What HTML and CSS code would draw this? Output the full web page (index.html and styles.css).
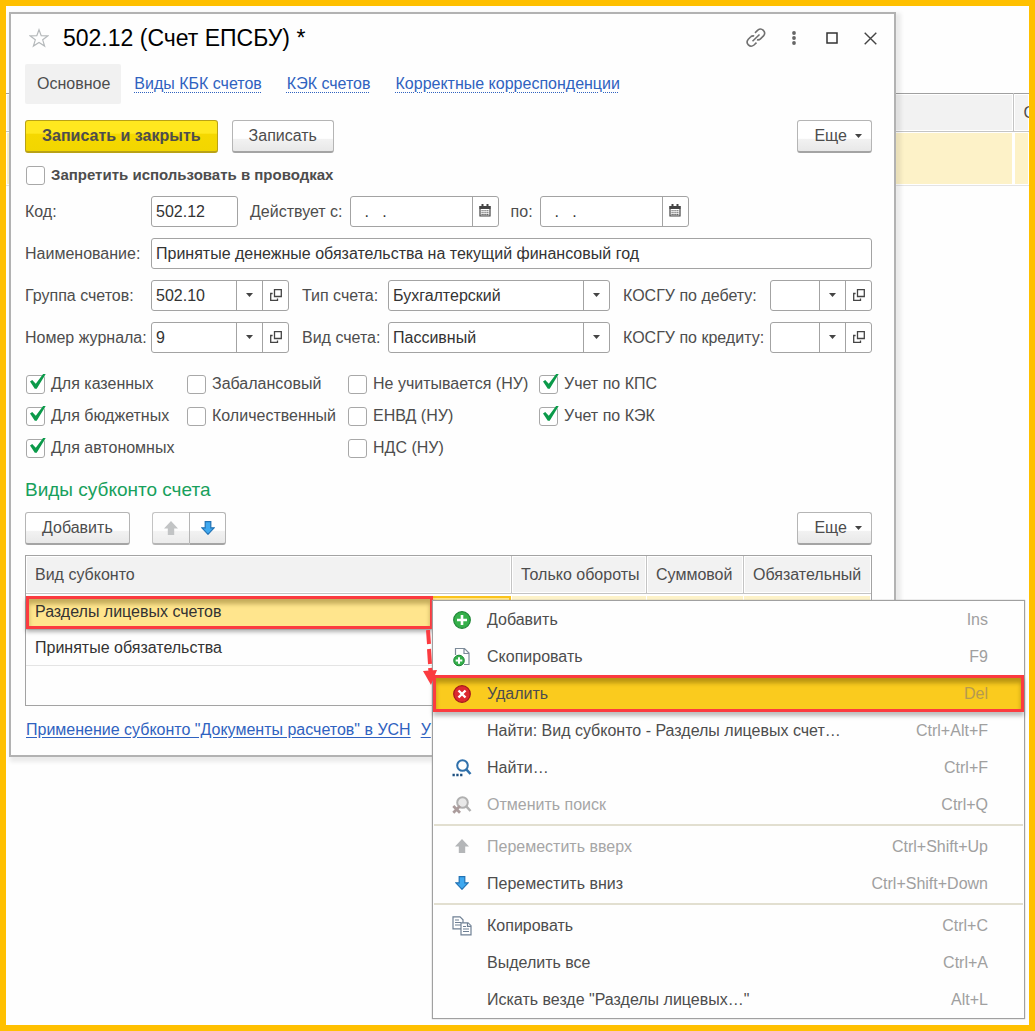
FILE: index.html
```html
<!DOCTYPE html>
<html lang="ru">
<head>
    <meta charset="UTF-8">
    <meta name="viewport" content="width=device-width, initial-scale=1.0">
    <title>502.12 (Счет ЕПСБУ)</title>
    <link rel="stylesheet" href="styles.css">
</head>
<body>
    <!-- Shared icons -->
    <svg class="sprite" aria-hidden="true">
        <symbol id="i-caret" viewBox="0 0 7 4"><path d="M0 0h7L3.500 4z" fill="#444"/></symbol>
        <symbol id="i-open" viewBox="0 0 12 12"><path d="M4.500 .7h6.800v6.800H4.500zM2.600 4.500H.7v6.800h6.800V9.400" fill="none" stroke="#444" stroke-width="1.300"/></symbol>
        <symbol id="i-calendar" viewBox="0 0 12 13">
            <path d="M1 2.500h10v9.500H1z" fill="#fff" stroke="#444" stroke-width="1.200"/>
            <path d="M.5 2h11v3H.5zM2.500 0h2v3h-2zM7.500 0h2v3h-2z" fill="#444"/>
            <path d="M2.500 6.700h7M2.500 8.700h7M2.500 10.600h7" stroke="#444" stroke-width="1.100" stroke-dasharray="1.200 .7"/>
        </symbol>
        <symbol id="i-up" viewBox="0 0 14 14"><path d="M7 0l7 7.500h-3.800V14H3.800V7.500H0z" fill="#b4b6b8"/></symbol>
        <symbol id="i-down" viewBox="0 0 14 14"><path d="M4.200.6h5.600v6.200h3.300L7 13.300.9 6.800h3.300z" fill="#3fa9f0" stroke="#2273b5" stroke-width="1.200"/></symbol>
    </svg>

    <div class="screen">
        <!-- List window behind the dialog -->
        <table class="backdrop">
            <tr><th></th><th class="last">С</th></tr>
            <tr><td></td><td class="last"></td></tr>
        </table>

        <main class="dialog">
            <header class="titlebar">
                <svg class="star" viewBox="0 0 20 19"><path d="M10 1.200l2.200 5.900 6.800.2-5.300 4 1.900 6.300L10 14l-5.600 3.600 1.900-6.300-5.300-4 6.800-.2z" fill="none" stroke="#b5b9bb" stroke-width="1.200"/></svg>
                <h1>502.12 (Счет ЕПСБУ) *</h1>
                <button class="win-btn" aria-label="Ссылка">
                    <svg width="20" height="20" viewBox="0 0 20 20" fill="none" stroke="#707070" stroke-width="1.600"><path d="M9 4.800l2.800-2.600c3.800-3.300 9 1.700 5.700 5.700l-3 3c-1 .9-2.200 1.200-3.500.9M4.800 8.700l-2.500 2.500c-3.400 4 1.700 9.200 5.700 5.800l2.500-2.400M4.800 8.700c1-.8 2.200-1 3.400-.7M6.500 13.300l7-6.800"/></svg>
                </button>
                <button class="win-btn" aria-label="Меню">
                    <svg width="4" height="14" viewBox="0 0 4 14" fill="#666"><circle cx="2" cy="2" r="1.900"/><circle cx="2" cy="7" r="1.900"/><circle cx="2" cy="12" r="1.900"/></svg>
                </button>
                <button class="win-btn" aria-label="Развернуть">
                    <svg width="12" height="12" viewBox="0 0 12 12"><path d="M1 1h10v10H1z" fill="none" stroke="#333" stroke-width="1.500"/></svg>
                </button>
                <button class="win-btn" aria-label="Закрыть">
                    <svg width="13" height="13" viewBox="0 0 13 13"><path d="M.7.7l11.600 11.600M12.300.7L.7 12.300" stroke="#444" stroke-width="1.400"/></svg>
                </button>
            </header>

            <nav class="tabs">
                <a class="tab active" href="#">Основное</a>
                <a class="tab" href="#">Виды КБК счетов</a>
                <a class="tab" href="#">КЭК счетов</a>
                <a class="tab" href="#">Корректные корреспонденции</a>
            </nav>

            <div class="toolbar">
                <button class="btn primary">Записать и закрыть</button>
                <button class="btn">Записать</button>
                <button class="btn more">Еще <svg class="caret"><use href="#i-caret"/></svg></button>
            </div>

            <label class="check strong"><input type="checkbox"> Запретить использовать в проводках</label>

            <div class="form">
                <div class="row">
                    <label class="first" for="code">Код:</label>
                    <div class="field code"><input type="text" id="code" value="502.12"></div>
                    <label class="date-label" for="from">Действует с:</label>
                    <div class="field date"><input type="text" id="from" value="  .   ."><button aria-label="Календарь"><svg class="cal"><use href="#i-calendar"/></svg></button></div>
                    <label class="date-label" for="to">по:</label>
                    <div class="field date"><input type="text" id="to" value="  .   ."><button aria-label="Календарь"><svg class="cal"><use href="#i-calendar"/></svg></button></div>
                </div>
                <div class="row">
                    <label class="first" for="name">Наименование:</label>
                    <div class="field wide"><input type="text" id="name" value="Принятые денежные обязательства на текущий финансовый год"></div>
                </div>
                <div class="row grid">
                    <label for="group">Группа счетов:</label>
                    <div class="field"><input type="text" id="group" value="502.10"><button aria-label="Выбрать"><svg class="caret"><use href="#i-caret"/></svg></button><button aria-label="Открыть"><svg class="open"><use href="#i-open"/></svg></button></div>
                    <label class="indent" for="type">Тип счета:</label>
                    <div class="field"><select id="type"><option>Бухгалтерский</option></select><span class="drop"><svg class="caret"><use href="#i-caret"/></svg></span></div>
                    <label class="indent" for="debit">КОСГУ по дебету:</label>
                    <div class="field"><input type="text" id="debit"><button aria-label="Выбрать"><svg class="caret"><use href="#i-caret"/></svg></button><button aria-label="Открыть"><svg class="open"><use href="#i-open"/></svg></button></div>
                </div>
                <div class="row grid">
                    <label for="journal">Номер журнала:</label>
                    <div class="field"><input type="text" id="journal" value="9"><button aria-label="Выбрать"><svg class="caret"><use href="#i-caret"/></svg></button><button aria-label="Открыть"><svg class="open"><use href="#i-open"/></svg></button></div>
                    <label class="indent" for="kind">Вид счета:</label>
                    <div class="field"><select id="kind"><option>Пассивный</option></select><span class="drop"><svg class="caret"><use href="#i-caret"/></svg></span></div>
                    <label class="indent" for="credit">КОСГУ по кредиту:</label>
                    <div class="field"><input type="text" id="credit"><button aria-label="Выбрать"><svg class="caret"><use href="#i-caret"/></svg></button><button aria-label="Открыть"><svg class="open"><use href="#i-open"/></svg></button></div>
                </div>
            </div>

            <div class="checks">
                <div class="check-col">
                    <label class="check"><input type="checkbox" checked> Для казенных</label>
                    <label class="check"><input type="checkbox" checked> Для бюджетных</label>
                    <label class="check"><input type="checkbox" checked> Для автономных</label>
                </div>
                <div class="check-col">
                    <label class="check"><input type="checkbox"> Забалансовый</label>
                    <label class="check"><input type="checkbox"> Количественный</label>
                </div>
                <div class="check-col">
                    <label class="check"><input type="checkbox"> Не учитывается (НУ)</label>
                    <label class="check"><input type="checkbox"> ЕНВД (НУ)</label>
                    <label class="check"><input type="checkbox"> НДС (НУ)</label>
                </div>
                <div class="check-col">
                    <label class="check"><input type="checkbox" checked> Учет по КПС</label>
                    <label class="check"><input type="checkbox" checked> Учет по КЭК</label>
                </div>
            </div>

            <h2>Виды субконто счета</h2>
            <div class="toolbar table-toolbar">
                <button class="btn">Добавить</button>
                <div class="btn-group">
                    <button class="btn" aria-label="Вверх" disabled><svg class="arrow"><use href="#i-up"/></svg></button>
                    <button class="btn" aria-label="Вниз"><svg class="arrow"><use href="#i-down"/></svg></button>
                </div>
                <button class="btn more">Еще <svg class="caret"><use href="#i-caret"/></svg></button>
            </div>

            <div class="table-box">
                <table class="subconto">
                    <colgroup><col><col class="c-turn"><col class="c-sum"><col class="c-req"></colgroup>
                    <tr><th>Вид субконто</th><th>Только обороты</th><th>Суммовой</th><th>Обязательный</th></tr>
                    <tr class="selected"><td>Разделы лицевых счетов<span class="callout"></span></td><td></td><td></td><td></td></tr>
                    <tr><td>Принятые обязательства</td><td></td><td></td><td></td></tr>
                </table>
            </div>

            <div class="links">
                <a href="#">Применение субконто "Документы расчетов" в УСН</a>
                <a href="#">У</a>
            </div>
        </main>

        <!-- Context menu -->
        <div class="menu" role="menu">
            <button class="item" role="menuitem">
                <svg viewBox="0 0 20 20"><circle cx="10" cy="10" r="8.300" fill="#35b04a" stroke="#1c8434" stroke-width="1.200"/><path d="M10 5v10M5 10h10" stroke="#fff" stroke-width="2.600"/></svg>
                <span>Добавить</span><kbd>Ins</kbd>
            </button>
            <button class="item" role="menuitem">
                <svg viewBox="0 0 20 20"><path d="M3.500 8V1.500h9l4.500 4.500V17.500h-5M12 1.500v5h5" fill="none" stroke="#7d8b99" stroke-width="1.200"/><circle cx="7" cy="13.500" r="5.300" fill="#35b04a" stroke="#1c8434"/><path d="M7 10.200v6.600M3.700 13.500h6.600" stroke="#fff" stroke-width="2"/></svg>
                <span>Скопировать</span><kbd>F9</kbd>
            </button>
            <button class="item current" role="menuitem">
                <svg viewBox="0 0 20 20"><circle cx="10" cy="10" r="8.300" fill="#dc2a30" stroke="#a3161c" stroke-width="1.200"/><path d="M6.500 6.500l7 7M13.500 6.500l-7 7" stroke="#fff" stroke-width="2.400"/></svg>
                <span>Удалить</span><kbd>Del</kbd>
            </button>
            <button class="item" role="menuitem">
                <svg viewBox="0 0 20 20"></svg>
                <span>Найти: Вид субконто - Разделы лицевых счет…</span><kbd>Ctrl+Alt+F</kbd>
            </button>
            <button class="item" role="menuitem">
                <svg viewBox="0 0 20 20"><circle cx="10.500" cy="7.500" r="5.300" fill="none" stroke="#2f70ab" stroke-width="2"/><path d="M14 11l4.500 5" stroke="#2f70ab" stroke-width="2.600"/><path d="M.5 17h2.300M4.300 17h2.300M8.100 17h2.300" stroke="#1c4f80" stroke-width="2.300"/></svg>
                <span>Найти…</span><kbd>Ctrl+F</kbd>
            </button>
            <button class="item off" role="menuitem" disabled>
                <svg viewBox="0 0 20 20"><circle cx="10.500" cy="7.500" r="5.300" fill="#e8e8e8" stroke="#b0b0b0" stroke-width="2"/><path d="M14 11l4.500 5" stroke="#b0b0b0" stroke-width="2.600"/><path d="M1.300 11l6.700 6.700M8 11l-6.700 6.700" stroke="#ab9c9c" stroke-width="2.800"/></svg>
                <span>Отменить поиск</span><kbd>Ctrl+Q</kbd>
            </button>
            <hr>
            <button class="item off" role="menuitem" disabled>
                <svg viewBox="-3 -2 20 20"><use href="#i-up" width="14" height="14"/></svg>
                <span>Переместить вверх</span><kbd>Ctrl+Shift+Up</kbd>
            </button>
            <button class="item" role="menuitem">
                <svg viewBox="-3 -2 20 20"><use href="#i-down" width="14" height="14"/></svg>
                <span>Переместить вниз</span><kbd>Ctrl+Shift+Down</kbd>
            </button>
            <hr>
            <button class="item" role="menuitem">
                <svg viewBox="0 0 20 20" fill="#fff" stroke="#6f8094" stroke-width="1.200"><path d="M1 .8h7l3 3v9H1z"/><path d="M3 4h4M3 6.500h6M3 9h6"/><path d="M9 6.800h7l3 3v9H9z"/><path d="M15.500 7v3.300H19M11 10.500h3M11 13h6M11 15.500h6"/></svg>
                <span>Копировать</span><kbd>Ctrl+C</kbd>
            </button>
            <button class="item" role="menuitem">
                <svg viewBox="0 0 20 20"></svg>
                <span>Выделить все</span><kbd>Ctrl+A</kbd>
            </button>
            <button class="item" role="menuitem">
                <svg viewBox="0 0 20 20"></svg>
                <span>Искать везде "Разделы лицевых…"</span><kbd>Alt+L</kbd>
            </button>
        </div>

        <svg class="pointer" viewBox="0 0 16 56"><path d="M6 0l1 14M7 19l1 15M8 38l1 6" stroke="#fb3b40" stroke-width="4"/><path d="M1 41l14-1L9 55z" fill="#fb3b40"/></svg>
    </div>
</body>
</html>
```
FILE: styles.css
```css
* {
    box-sizing: border-box;
}

body {
    margin: 0;
    background-color: #ffc000;
    font-family: "Liberation Sans", Arial, sans-serif;
    font-size: 16px;
    line-height: 20px;
    color: #4d4d4d;
}

button, input, select, kbd {
    font: inherit;
    color: inherit;
}

button {
    cursor: pointer;
}

svg {
    display: block;
    flex: none;
}

.sprite {
    position: absolute;
    width: 0;
    height: 0;
}

.screen {
    position: relative;
    min-height: 100vh;
    padding: 6px 133px 6px 3px;
    border: 6px solid #ffc000;
    border-radius: 6px;
    background-color: #fefefe;
    overflow: hidden;
}

/* List window behind the dialog */
.backdrop {
    position: absolute;
    top: 87px;
    left: 0;
    width: 100%;
    table-layout: fixed;
    border-collapse: collapse;
    border-top: 1px solid #a0a0a0;
}

.backdrop th {
    height: 38px;
    padding: 0 0 0 10px;
    background-color: #f2f2f2;
    border-bottom: 1px solid #c4c4c4;
    box-shadow: inset 0 0 0 1px #fff;
    font-weight: normal;
    text-align: left;
    overflow: hidden;
}

.backdrop td {
    height: 54px;
    background-color: #fdf2c8;
    border-bottom: 1px solid #e4e4e4;
    box-shadow: inset 0 0 0 1px #fff;
}

.backdrop .last {
    width: 16px;
    border-left: 1px solid #c4c4c4;
}

.backdrop td.last {
    border-left-color: #fff;
}

/* Dialog window */
.dialog {
    position: relative;
    padding: 7px 22px 15px 14px;
    border: 2px solid #b2b2b2;
    background-color: #fefefe;
    box-shadow: 3px 3px 4px 2px rgba(0, 0, 0, 0.08);
}

.titlebar {
    display: flex;
    align-items: center;
    height: 34px;
}

.star {
    width: 20px;
    height: 20px;
    margin: 0 14px 0 4px;
}

h1 {
    flex: 1;
    margin: 0;
    font-size: 23px;
    font-weight: normal;
    line-height: 34px;
    color: #000;
}

.win-btn {
    display: flex;
    align-items: center;
    justify-content: center;
    width: 38px;
    height: 30px;
    padding: 0;
    border: none;
    background: none;
}

.win-btn:last-child {
    margin-right: -17px;
}

.tabs {
    display: flex;
    align-items: center;
    gap: 25px;
    margin-top: 9px;
}

.tab {
    color: #2f62c0;
    text-decoration: underline dotted;
    text-decoration-thickness: 1px;
    text-underline-offset: 3px;
}

.tab.active {
    margin-right: -12px;
    padding: 10px 11px 10px 12px;
    border-radius: 2px;
    background-color: #f1f1f1;
    color: #4d4d4d;
    text-decoration: none;
}

.toolbar {
    display: flex;
    align-items: center;
    gap: 14px;
    margin-top: 16px;
}

.btn {
    display: flex;
    align-items: center;
    height: 33px;
    padding: 0 16px;
    border: 1px solid #b5b5b5;
    border-bottom: 2px solid #a4a4a4;
    border-radius: 3px;
    background: linear-gradient(#fff 58%, #f2f2f2 60%, #e8e8e8);
}

.btn.primary {
    border-color: #b9a216;
    background: linear-gradient(#ffe81f 40%, #f5d800 45%, #f2d600);
    font-weight: bold;
}

.btn.more {
    gap: 8px;
    margin-left: auto;
    padding-right: 9px;
}

.caret {
    width: 7px;
    height: 4px;
}

.check {
    display: flex;
    align-items: center;
    gap: 6px;
    height: 32px;
    white-space: nowrap;
}

.check.strong {
    height: 20px;
    margin: 12px 0 11px;
    font-size: 15px;
    font-weight: bold;
}

.check input {
    position: relative;
    appearance: none;
    width: 19px;
    height: 19px;
    margin: 0 0 0 1px;
    border: 1px solid #a8a8a8;
    border-radius: 3px;
    background-color: #fff;
}

/* Tick drawn over the box edge */
.check input:checked::after {
    content: "";
    position: absolute;
    left: 3px;
    top: -2px;
    width: 16px;
    height: 16px;
    background-color: #0b9a4a;
    clip-path: polygon(0 50%, 14% 40%, 36% 64%, 84% 0, 100% 0, 42% 95%, 30% 95%);
}

/* Form fields */
.form {
    display: flex;
    flex-direction: column;
    gap: 11px;
}

.row {
    display: flex;
    align-items: center;
    white-space: nowrap;
}

.row.grid {
    display: grid;
    grid-template-columns: 126px 138px 99px minmax(120px, 1fr) 160px 102px;
}

.first {
    width: 126px;
}

.indent {
    padding-left: 13px;
}

.date-label {
    padding: 0 7px 0 12px;
}

.field {
    display: flex;
    height: 31px;
    border: 1px solid #a3a3a3;
    border-radius: 3px;
    background-color: #fff;
    color: #333;
}

.field.code {
    width: 87px;
}

.field.date {
    width: 149px;
}

.field.date input {
    padding-left: 5px;
    white-space: pre;
}

.field.wide {
    flex: 1;
}

.field input, .field select {
    flex: 1;
    min-width: 0;
    width: 0;
    padding: 0 4px;
    border: none;
    background: none;
    appearance: none;
    outline: none;
}

.field button, .drop {
    display: flex;
    align-items: center;
    justify-content: center;
    width: 26px;
    padding: 0 0 2px;
    border: none;
    border-left: 1px solid #a3a3a3;
    background: none;
}

.cal {
    width: 12px;
    height: 13px;
}

.open {
    width: 12px;
    height: 12px;
}

.checks {
    display: flex;
    margin-top: 15px;
}

.check-col {
    width: 161px;
}

.check-col:nth-child(3) {
    width: 191px;
}

h2 {
    margin: 14px 0 0;
    font-size: 19px;
    font-weight: normal;
    line-height: 24px;
    color: #17a05c;
}

.table-toolbar {
    gap: 22px;
    margin-top: 10px;
}

.btn-group {
    display: flex;
}

.btn-group .btn {
    width: 37px;
    padding: 0 11px;
}

.btn-group .btn:first-child {
    border-right: none;
    border-radius: 3px 0 0 3px;
    opacity: 0.8;
}

.btn-group .btn:last-child {
    border-radius: 0 3px 3px 0;
}

.arrow {
    width: 14px;
    height: 14px;
}

/* Table */
.table-box {
    height: 151px;
    margin-top: 10px;
    border: 1px solid #a3a3a3;
}

.subconto {
    width: 100%;
    table-layout: fixed;
    border-collapse: separate;
    border-spacing: 0;
}

.c-turn {
    width: 135px;
}

.c-sum {
    width: 97px;
}

.c-req {
    width: 127px;
}

.subconto th {
    height: 38px;
    padding: 0 0 0 9px;
    border-right: 1px solid #c4c4c4;
    border-bottom: 1px solid #c4c4c4;
    background-color: #f2f2f2;
    box-shadow: inset 0 0 0 1px #fff;
    font-weight: normal;
    text-align: left;
    white-space: nowrap;
}

.subconto th:last-child {
    border-right: none;
}

.subconto td {
    position: relative;
    height: 36px;
    padding: 0 9px;
    border-bottom: 1px solid #e4e4e4;
    color: #333;
}

.subconto .selected td {
    border-top: 2px solid #fff;
    border-right: 1px solid #fff;
    background-color: #fdf2c8;
}

.subconto .selected td:first-child {
    padding-bottom: 2px;
    box-shadow: inset 0 0 0 2px #fac31c;
    background-color: #ffe58d;
}

.callout {
    position: absolute;
    top: 0;
    left: 0;
    right: 78px;
    bottom: 0;
    border: 3px solid #fb3b40;
    box-shadow: 0 3px 4px rgba(0, 0, 0, 0.3), inset 0 5px 4px rgba(90, 70, 0, 0.35);
}

.links {
    display: flex;
    gap: 10px;
    margin-top: 14px;
    padding-left: 1px;
    white-space: nowrap;
}

.links a {
    color: #2f62c0;
    text-underline-offset: 2px;
}

/* Context menu */
.menu {
    position: absolute;
    top: 594px;
    left: 426px;
    right: 4px;
    border: 1px solid #a0a0a0;
    background-color: #fefefe;
    box-shadow: 0 0 1px #999;
}

.item {
    display: flex;
    align-items: center;
    width: 100%;
    height: 37px;
    padding: 0 36px 0 19px;
    border: none;
    background: none;
    text-align: left;
    white-space: nowrap;
}

.item svg {
    width: 20px;
    height: 20px;
    margin-right: 15px;
}

.item span {
    flex: 1;
}

.item kbd {
    color: #a0a0a0;
}

.item.off {
    color: #a6a6a6;
}

.item.current {
    padding: 0 33px 0 16px;
    border: 3px solid #fb3b40;
    background-color: #facb1e;
    box-shadow: 0 4px 4px rgba(0, 0, 0, 0.25), inset 0 5px 4px rgba(90, 70, 0, 0.4);
}

.item.current kbd {
    color: #b59a50;
}

.menu hr {
    margin: 1px 1px 2px;
    border: none;
    border-top: 2px solid #e2dfd0;
}

.pointer {
    position: absolute;
    top: 624px;
    left: 416px;
    width: 16px;
    height: 56px;
}
```
